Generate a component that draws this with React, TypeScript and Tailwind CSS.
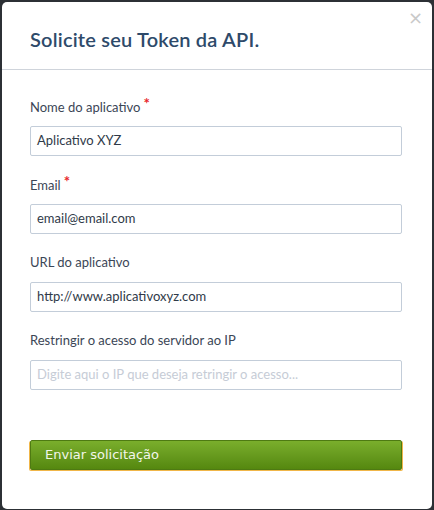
import React from "react";

function Field({ label, required, value, placeholder }: { label: string; required?: boolean; value?: string; placeholder?: string }) {
  return (
    <div className="flex flex-col">
      <label className="text-[13px] leading-[16px] text-[#3b4656] h-[16px]">
        {label}
        {required && <span className="text-[#e8262b] text-[15px] font-bold ml-[3px] relative -top-[3px]">*</span>}
      </label>
      <div className="mt-[12px] h-[30px] border border-[#c3cdd9] rounded-[2px] flex items-center px-[6px] text-[13px]">
        {value ? (
          <span className="text-[#2f3a48]">{value}</span>
        ) : (
          <span className="text-[#c6ccd6]">{placeholder}</span>
        )}
      </div>
    </div>
  );
}

export default function App() {
  return (
    <div className="w-[434px] h-[510px] bg-[#2c3035] pt-[2px] px-[2px] overflow-hidden" style={{ fontFamily: "Lato, 'Open Sans', sans-serif" }}>
      <div className="bg-white rounded-[5px] h-[507px] relative flex flex-col">
        <div className="h-[68px] border-b border-[#cfd4db] flex items-center px-[28px] pt-[6px]">
          <h1 className="text-[20px] font-semibold text-[#2e4a6a] tracking-[0.2px]">Solicite seu Token da API.</h1>
        </div>
        <span className="absolute right-[9px] top-[7px] text-[#c9c9c9] text-[18px] leading-none" style={{ fontFamily: "'DejaVu Sans', sans-serif" }}>×</span>
        <div className="pl-[28px] pr-[30px] pt-[28px] flex flex-col gap-[20px]">
          <Field label="Nome do aplicativo" required value="Aplicativo XYZ" />
          <Field label="Email" required value="email@email.com" />
          <Field label="URL do aplicativo" value="http://www.aplicativoxyz.com" />
          <Field label="Restringir o acesso do servidor ao IP" placeholder="Digite aqui o IP que deseja retringir o acesso..." />
        </div>
        <div className="pl-[28px] pr-[30px] mt-[50px]">
          <button className="w-full h-[30px] rounded-[2px] border border-[#4e7a12] bg-gradient-to-b from-[#7aae2c] to-[#55880f] text-left pl-[14px] text-[#f2f6ea] text-[13px] shadow-[1px_1px_0_#f0b649,-1px_1px_0_#f0b649]" style={{ fontFamily: "'DejaVu Sans', sans-serif" }}>
            Enviar solicitação
          </button>
        </div>
      </div>
    </div>
  );
}
